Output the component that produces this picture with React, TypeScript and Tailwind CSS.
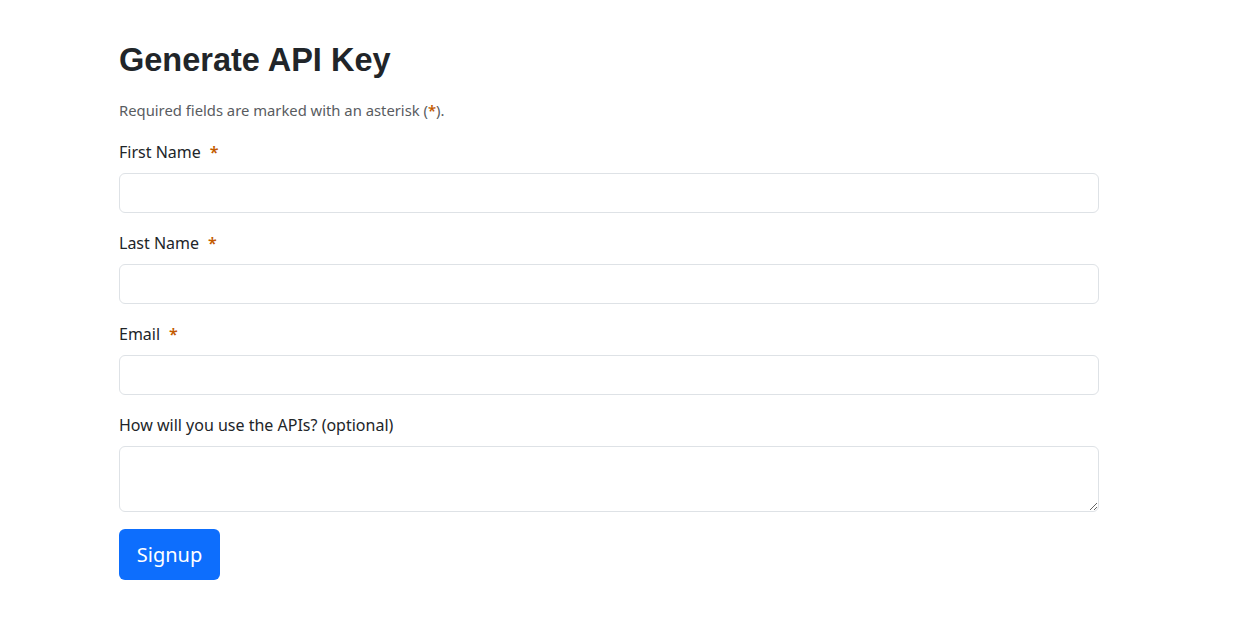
import React from 'react';

const body = { fontFamily: '"Noto Sans", "Open Sans", sans-serif' };

function Field({ label, required, textarea }: { label: string; required?: boolean; textarea?: boolean }) {
  return (
    <div className={textarea ? 'mb-[17px]' : 'mb-[18px]'}>
      <label className="block mb-[9px] text-[16px] leading-6 text-[#212529]">
        {label}
        {required && <span className="ml-[9px] font-semibold text-[#c35a00]">*</span>}
      </label>
      {textarea ? (
        <textarea className="block w-full h-[66px] rounded-[6px] border border-[#dee2e6] bg-white px-3 py-1.5 outline-none" />
      ) : (
        <input type="text" className="block w-full h-[40px] rounded-[6px] border border-[#dee2e6] bg-white px-3 outline-none" />
      )}
    </div>
  );
}

export default function App() {
  return (
    <div className="min-h-screen bg-white" style={body}>
      <div className="w-[980px] ml-[119px] pt-[41px]">
        <h1 className="text-[32.5px] leading-[1.2] font-bold text-[#212529] mb-[20px]" style={{ fontFamily: '"Liberation Sans", Arial, sans-serif' }}>
          Generate API Key
        </h1>
        <p className="text-[14.8px] leading-[21px] text-[#595c5f] mb-[19px]">
          Required fields are marked with an asterisk (<span className="font-semibold text-[#c35a00]">*</span>).
        </p>
        <form onSubmit={(e) => e.preventDefault()}>
          <Field label="First Name" required />
          <Field label="Last Name" required />
          <Field label="Email" required />
          <Field label="How will you use the APIs? (optional)" textarea />
          <button type="submit" className="h-[51px] w-[101px] rounded-[6px] bg-[#0d6efd] text-[20px] text-white">
            Signup
          </button>
        </form>
      </div>
    </div>
  );
}
